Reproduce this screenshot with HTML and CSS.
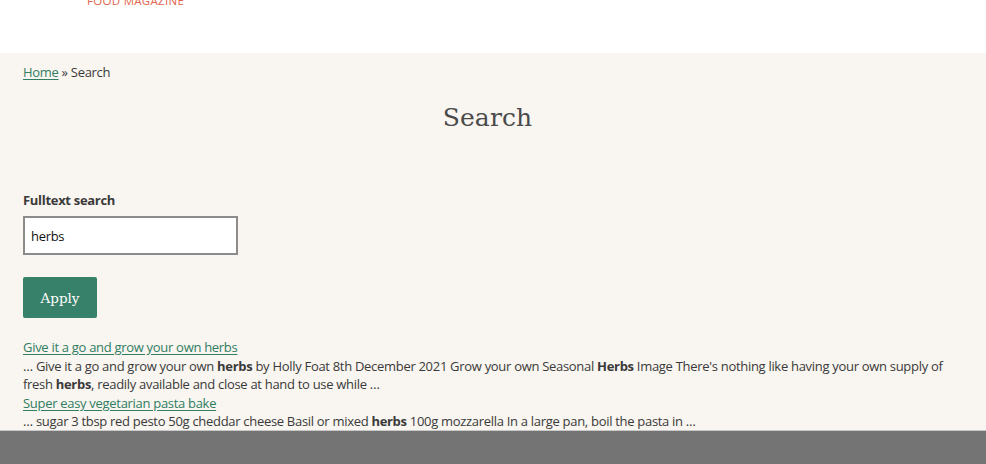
FILE: index.html
```html
<!DOCTYPE html>
<html lang="en">
<head>
<meta charset="utf-8">
<title>Search</title>
<link rel="stylesheet" href="styles.css">
</head>
<body>
<header class="site-header">
  <div class="brand">FOOD MAGAZINE</div>
</header>
<main class="main">
  <nav class="breadcrumb"><a href="#">Home</a> » Search</nav>
  <h1 class="title">Search</h1>
  <form class="search-form">
    <label class="label" for="q">Fulltext search</label>
    <input class="input" id="q" type="text" value="herbs">
    <button class="button" type="button">Apply</button>
  </form>
  <div class="results">
    <div class="result">
      <a class="result-link" href="#">Give it a go and grow your own herbs</a>
      <p class="snippet">… Give it a go and grow your own <strong>herbs</strong> by Holly Foat 8th December 2021 Grow your own Seasonal <strong>Herbs</strong> Image There's nothing like having your own supply of fresh <strong>herbs</strong>, readily available and close at hand to use while …</p>
    </div>
    <div class="result">
      <a class="result-link" href="#">Super easy vegetarian pasta bake</a>
      <p class="snippet">… sugar 3 tbsp red pesto 50g cheddar cheese Basil or mixed <strong>herbs</strong> 100g mozzarella In a large pan, boil the pasta in …</p>
    </div>
  </div>
</main>
<div class="bottom-bar"></div>
</body>
</html>
```
FILE: styles.css
```css
* { box-sizing: border-box; }
html, body { margin: 0; padding: 0; }
body {
  font-family: "Open Sans", "Liberation Sans", sans-serif;
  font-size: 13px;
  letter-spacing: -0.3px;
  color: #3a3a3a;
  background: #f9f5f0;
}
.site-header {
  background: #fff;
  height: 53px;
  padding-left: 87px;
  overflow: hidden;
}
.brand {
  font-size: 11.5px;
  line-height: 12px;
  margin-top: -5px;
  color: #e0644b;
  letter-spacing: 0.3px;
}
.main {
  padding: 10px 34px 20px 23px;
}
.breadcrumb {
  height: 18px;
  line-height: 18px;
}
.breadcrumb a, .result-link {
  color: #2f7d62;
  text-decoration: underline;
  text-underline-offset: 2px;
}
.title {
  font-family: "DejaVu Serif", "Liberation Serif", serif;
  font-weight: normal;
  font-size: 25px;
  height: 36px;
  line-height: 36px;
  margin: 19px 0 0;
  text-align: center;
  color: #4a4a4a;
  letter-spacing: 0.1px;
}
.search-form {
  display: flex;
  flex-direction: column;
  align-items: flex-start;
  margin-top: 55px;
}
.label {
  font-weight: bold;
  height: 18px;
  line-height: 18px;
  margin-bottom: 7px;
}
.input {
  width: 215px;
  height: 39px;
  margin: 0;
  border: 2px solid #8c8c8c;
  background: #fff;
  padding: 0 6px;
  font-family: "Open Sans", "Liberation Sans", sans-serif;
  font-size: 13px;
  letter-spacing: -0.3px;
  color: #111;
  outline: none;
}
.button {
  margin: 22px 0 0;
  width: 74px;
  height: 41px;
  background: #37806a;
  color: #fff;
  border: none;
  border-radius: 2px;
  font-family: "DejaVu Serif", "Liberation Serif", serif;
  font-size: 13.5px;
}
.results {
  margin-top: 20px;
}
.result-link {
  display: block;
  line-height: 18.6px;
}
.snippet {
  margin: 0;
  line-height: 18.6px;
}
.snippet strong { font-weight: bold; }
.bottom-bar {
  position: fixed;
  left: 0;
  right: 0;
  bottom: 0;
  height: 34px;
  background: #747474;
  border-top: 1px solid #c9c9c9;
}
```
